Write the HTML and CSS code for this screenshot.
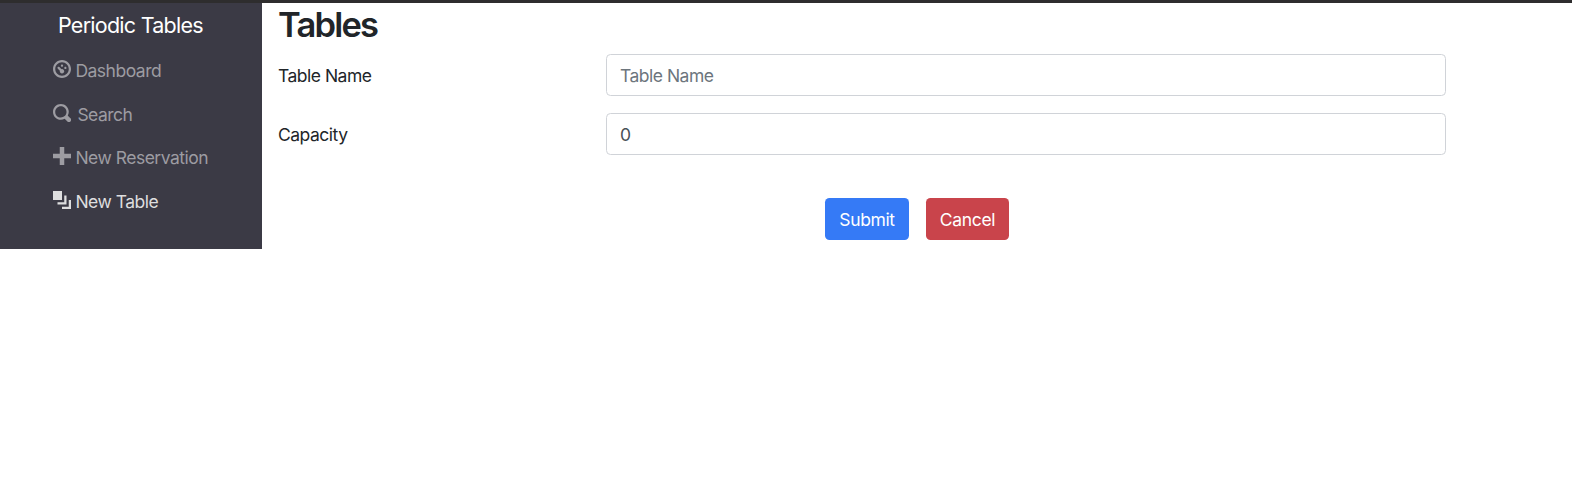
FILE: index.html
```html
<!DOCTYPE html>
<html lang="en">
<head>
<meta charset="utf-8">
<title>Periodic Tables</title>
<link rel="stylesheet" href="styles.css">
</head>
<body>
<div class="layout">
  <nav class="sidebar">
    <a class="brand">Periodic Tables</a>
    <ul class="menu">
      <li><a class="link"><svg class="icon" viewBox="0 0 8 8"><path d="M4 0C1.8 0 0 1.8 0 4s1.8 4 4 4 4-1.8 4-4-1.8-4-4-4zm0 1c1.66 0 3 1.34 3 3S5.66 7 4 7 1 5.66 1 4s1.34-3 3-3zm0 1c-.28 0-.5.22-.5.5s.22.5.5.5.5-.22.5-.5S4.28 2 4 2zm-1.66 1a.5.5 0 0 0-.19.84l.91.91c-.02.08-.06.16-.06.25 0 .55.45 1 1 1s1-.45 1-1-.45-1-1-1c-.09 0-.17.04-.25.06l-.91-.91a.5.5 0 0 0-.44-.16.5.5 0 0 0-.06 0zm3.16 0c-.28 0-.5.22-.5.5s.22.5.5.5.5-.22.5-.5-.22-.5-.5-.5z"/></svg><span>Dashboard</span></a></li>
      <li><a class="link wide"><svg class="icon" viewBox="0 0 8 8"><path d="M3.5 0C1.57 0 0 1.57 0 3.5S1.57 7 3.5 7c.59 0 1.17-.14 1.66-.41a1 1 0 0 0 .13.13l1 1a1.02 1.02 0 1 0 1.44-1.44l-1-1a1 1 0 0 0-.16-.13c.27-.49.44-1.06.44-1.66C7.01 1.56 5.44 0 3.51 0zm0 1C4.89 1 6 2.11 6 3.5c0 .66-.24 1.27-.66 1.72l-.03.03a1 1 0 0 0-.13.13c-.44.4-1.04.63-1.69.63-1.39 0-2.5-1.11-2.5-2.5s1.11-2.5 2.5-2.5z"/></svg><span>Search</span></a></li>
      <li><a class="link"><svg class="icon" viewBox="0 0 8 8"><path d="M3 0v3H0v2h3v3h2V5h3V3H5V0z"/></svg><span>New Reservation</span></a></li>
      <li><a class="link active"><svg class="icon" viewBox="0 0 8 8"><path d="M0 0v4h4V0zm5 2v3H2v1h4V2zm2 2v3H4v1h4V4z"/></svg><span>New Table</span></a></li>
    </ul>
  </nav>
  <main class="content">
    <h1 class="heading">Tables</h1>
    <form>
      <div class="row"><label class="label" for="name">Table Name</label><input class="field" id="name" placeholder="Table Name"></div>
      <div class="row"><label class="label" for="capacity">Capacity</label><input class="field" id="capacity" value="0"></div>
      <div class="actions"><button class="btn submit" type="button">Submit</button><button class="btn cancel" type="button">Cancel</button></div>
    </form>
  </main>
</div>
</body>
</html>
```
FILE: styles.css
```css
* { box-sizing: border-box; }
body {
  margin: 0;
  border-top: 3px solid #2e2d2e;
  background: #fff;
  color: #212529;
  font: 17.5px/26px Inter, "Liberation Sans", sans-serif;
  letter-spacing: -0.5px;
}
.layout { display: flex; align-items: flex-start; }
.sidebar {
  width: 262px;
  height: 246px;
  padding: 6px 0 0 53px;
  background: #3b3a45;
}
.brand {
  display: block;
  padding-left: 5px;
  color: #fff;
  font-size: 21.5px;
  line-height: 32px;
  letter-spacing: -0.75px;
  white-space: nowrap;
}
.menu { margin: 7px 0 0; padding: 0; list-style: none; }
.link {
  display: flex;
  align-items: center;
  gap: 4.4px;
  height: 43.75px;
  color: #9d9ca2;
  white-space: nowrap;
}
.link span { padding-top: 2px; }
.wide { gap: 6.4px; }
.active { color: #dededf; }
.icon { width: 18px; height: 18px; flex: none; margin-bottom: 2px; fill: currentColor; }
.content { flex: 1; padding: 0 126px 0 16px; }
.heading {
  margin: 0;
  height: 51px;
  font-size: 34.5px;
  font-weight: 600;
  line-height: 44px;
  letter-spacing: -1.8px;
}
.row { display: flex; align-items: center; margin-bottom: 17px; }
.label { width: 328px; padding-top: 1px; }
.field {
  flex: 1;
  height: 42px;
  padding: 0 13px;
  border: 1px solid #d0d3d8;
  border-radius: 4.5px;
  background: #fff;
  color: #495057;
  font: inherit;
  letter-spacing: inherit;
}
.field::placeholder { color: #6c757d; opacity: 1; }
.actions { display: flex; gap: 17px; margin-top: 43px; padding-left: 547px; }
.btn {
  height: 42px;
  padding: 1px 0 0;
  border: 0;
  border-radius: 4.5px;
  color: #fff;
  font: inherit;
  letter-spacing: -0.35px;
}
.submit { width: 84px; background: #357af6; }
.cancel { width: 83px; background: #c9444b; }
```
